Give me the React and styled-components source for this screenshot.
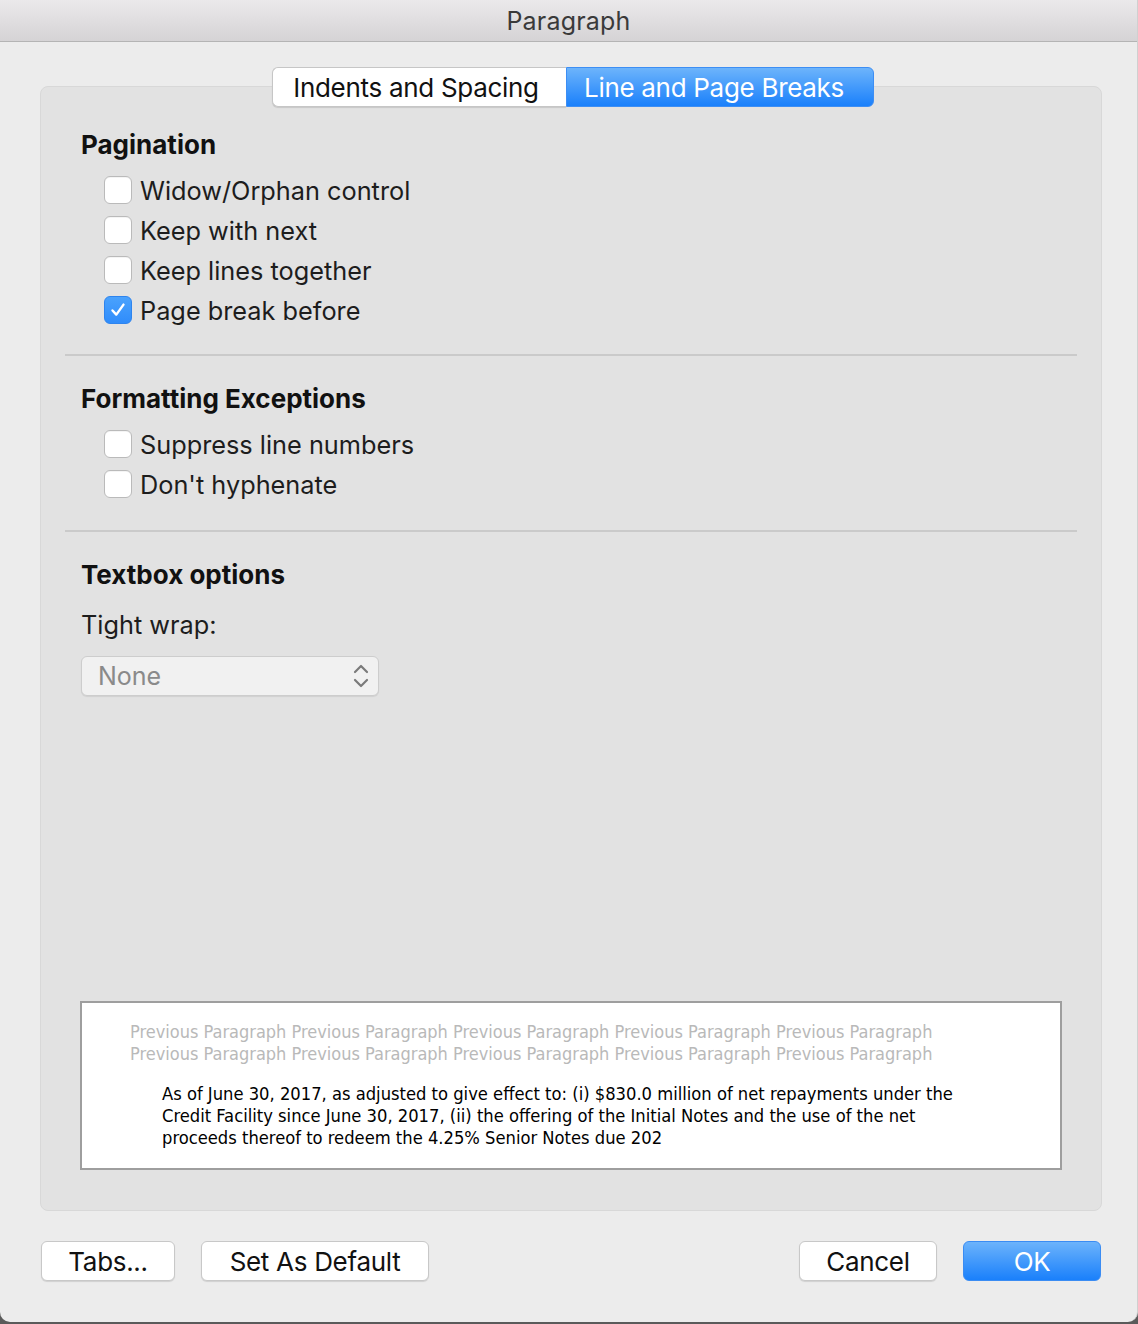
import React from "react";
import styled, { createGlobalStyle } from "styled-components";

const Global = createGlobalStyle`
  html, body { margin: 0; padding: 0; background: #5a5a5a; }
  body { font-family: Inter, "Noto Sans", sans-serif; -webkit-font-smoothing: antialiased; }
  #root { width: 1138px; height: 1324px; }
`;

const Window = styled.div`
  width: 1138px;
  height: 1322px;
  background: #ececec;
  border-radius: 0 0 10px 10px;
  display: flex;
  flex-direction: column;
  box-sizing: border-box;
  border-right: 1px solid #d0d0d0;
  overflow: hidden;
`;

const TitleBar = styled.div`
  height: 41px;
  flex: none;
  border-bottom: 1px solid #b4b4b4;
  background: linear-gradient(#ebe9eb, #d5d3d5);
  display: flex;
  align-items: center;
  justify-content: center;
  font-size: 25px;
  color: #3a3a3a;
  letter-spacing: 0.2px;
`;

const Body = styled.div`
  flex: 1;
  display: flex;
  flex-direction: column;
  padding: 25px 35px 41px 40px;
  min-height: 0;
`;

const TabsRow = styled.div`
  display: flex;
  justify-content: center;
  position: relative;
  z-index: 1;
  padding-left: 3px;
`;

const Tab = styled.div`
  height: 40px;
  box-sizing: border-box;
  display: flex;
  align-items: center;
  justify-content: center;
  padding-right: ${(p) => (p.$active ? 11 : 6)}px;
  font-size: 26px;
  letter-spacing: -0.3px;
  width: ${(p) => p.$w}px;
  border-radius: ${(p) => (p.$first ? "6px 0 0 6px" : "0 6px 6px 0")};
  ${(p) =>
    p.$active
      ? `background: linear-gradient(#6db4fb, #1a80fb); color: #fff; border: 1px solid #3d8ef4;`
      : `background: #fff; color: #111; border: 1px solid #c6c6c6; border-right: none; box-shadow: 0 1px 1px rgba(0,0,0,0.12);`}
`;

const Panel = styled.div`
  flex: 1;
  margin-top: -21px;
  background: #e2e2e2;
  border: 1px solid #d8d8d8;
  border-radius: 8px;
  padding: 42px 24px 40px 24px;
  display: flex;
  flex-direction: column;
`;

const Section = styled.div`
  padding-left: 16px;
`;

const Heading = styled.div`
  font-size: 26px;
  font-weight: 700;
  line-height: 32px;
  color: #111;
  margin-bottom: ${(p) => p.$mb ?? 9}px;
`;

const Rows = styled.div`
  display: flex;
  flex-direction: column;
  padding-left: 23px;
`;

const Row = styled.label`
  height: 40px;
  display: flex;
  align-items: center;
  gap: 8px;
  font-size: 25.3px;
  color: #1d1d1d;
`;

const Box = styled.span`
  width: 28px;
  height: 28px;
  box-sizing: border-box;
  border-radius: 6px;
  flex: none;
  display: flex;
  align-items: center;
  justify-content: center;
  ${(p) =>
    p.$checked
      ? `background: linear-gradient(#4aa2fd, #2f8cfb); border: 1px solid #2e84ee;`
      : `background: #fff; border: 1px solid #bababa; box-shadow: inset 0 1px 0 #f4f4f4;`}
`;

const Separator = styled.div`
  height: 2px;
  background: #cacaca;
  margin: ${(p) => p.$mt}px 0 27px;
`;

const Label = styled.div`
  font-size: 25.3px;
  line-height: 32px;
  color: #1d1d1d;
  margin-top: 18px;
  margin-bottom: 15px;
`;

const Select = styled.div`
  width: 298px;
  height: 40px;
  box-sizing: border-box;
  border: 1px solid #cdcdcd;
  border-radius: 6px;
  background: #f1f1f1;
  box-shadow: 0 1px 1px rgba(0, 0, 0, 0.08);
  display: flex;
  align-items: center;
  justify-content: space-between;
  padding: 0 8px 0 16px;
  font-size: 25px;
  color: #8a8a8a;
`;

const Preview = styled.div`
  margin: auto 15px 0;
  height: 169px;
  box-sizing: border-box;
  border: 2px solid #9e9e9e;
  background: #fff;
  padding: 18px 0 0 48px;
  font-family: "DejaVu Sans Condensed", "DejaVu Sans", sans-serif;
  font-size: 18px;
  line-height: 22px;
`;

const PrevLine = styled.div`
  color: #b9b9b9;
  white-space: nowrap;
`;

const CurBlock = styled.div`
  margin-top: 18px;
  padding-left: 32px;
  color: #000;
  font-size: 18.2px;
`;

const CurLine = styled.div`
  white-space: nowrap;
`;

const Footer = styled.div`
  display: flex;
  align-items: center;
  gap: 26px;
  margin-top: 30px;
  padding: 0 1px;
`;

const Spacer = styled.div`
  flex: 1;
`;

const Button = styled.div`
  height: 40px;
  width: ${(p) => p.$w}px;
  box-sizing: border-box;
  border-radius: 6px;
  display: flex;
  align-items: center;
  justify-content: center;
  font-size: 26px;
  letter-spacing: -0.3px;
  ${(p) =>
    p.$primary
      ? `background: linear-gradient(#6cb3fb, #1a80fb); color: #fff; border: 1px solid #3a8cf3;`
      : `background: #fff; color: #111; border: 1px solid #c8c8c8; box-shadow: 0 1px 1px rgba(0,0,0,0.12);`}
`;

const Check = () => (
  <svg width="18" height="18" viewBox="0 0 18 18">
    <path d="M3.5 9.5 L7.3 13.6 L14.5 3.6" fill="none" stroke="#fff" strokeWidth="2.4" strokeLinecap="round" strokeLinejoin="round" />
  </svg>
);

const Chevrons = () => (
  <svg width="18" height="28" viewBox="0 0 18 28">
    <path d="M3 10 L9 4 L15 10" fill="none" stroke="#7a7a7a" strokeWidth="2.2" strokeLinecap="round" strokeLinejoin="round" />
    <path d="M3 18 L9 24 L15 18" fill="none" stroke="#7a7a7a" strokeWidth="2.2" strokeLinecap="round" strokeLinejoin="round" />
  </svg>
);

const CheckRow = ({ checked, children }) => (
  <Row>
    <Box $checked={checked}>{checked && <Check />}</Box>
    {children}
  </Row>
);

const prev = "Previous Paragraph Previous Paragraph Previous Paragraph Previous Paragraph Previous Paragraph";

export default function App() {
  return (
    <>
      <Global />
      <Window>
        <TitleBar>Paragraph</TitleBar>
        <Body>
          <TabsRow>
            <Tab $first $w={294}>Indents and Spacing</Tab>
            <Tab $active $w={308}>Line and Page Breaks</Tab>
          </TabsRow>
          <Panel>
            <Section>
              <Heading>Pagination</Heading>
              <Rows>
                <CheckRow>Widow/Orphan control</CheckRow>
                <CheckRow>Keep with next</CheckRow>
                <CheckRow>Keep lines together</CheckRow>
                <CheckRow checked>Page break before</CheckRow>
              </Rows>
            </Section>
            <Separator $mt={24} />
            <Section>
              <Heading>Formatting Exceptions</Heading>
              <Rows>
                <CheckRow>Suppress line numbers</CheckRow>
                <CheckRow>Don't hyphenate</CheckRow>
              </Rows>
            </Section>
            <Separator $mt={26} />
            <Section>
              <Heading $mb={0}>Textbox options</Heading>
              <Label>Tight wrap:</Label>
              <Select>
                <span>None</span>
                <Chevrons />
              </Select>
            </Section>
            <Preview>
              <PrevLine>{prev}</PrevLine>
              <PrevLine>{prev}</PrevLine>
              <CurBlock>
                <CurLine>As of June 30, 2017, as adjusted to give effect to: (i) $830.0 million of net repayments under the</CurLine>
                <CurLine>Credit Facility since June 30, 2017, (ii) the offering of the Initial Notes and the use of the net</CurLine>
                <CurLine>proceeds thereof to redeem the 4.25% Senior Notes due 202</CurLine>
              </CurBlock>
            </Preview>
          </Panel>
          <Footer>
            <Button $w={134}>Tabs...</Button>
            <Button $w={228}>Set As Default</Button>
            <Spacer />
            <Button $w={138}>Cancel</Button>
            <Button $primary $w={138}>OK</Button>
          </Footer>
        </Body>
      </Window>
    </>
  );
}
